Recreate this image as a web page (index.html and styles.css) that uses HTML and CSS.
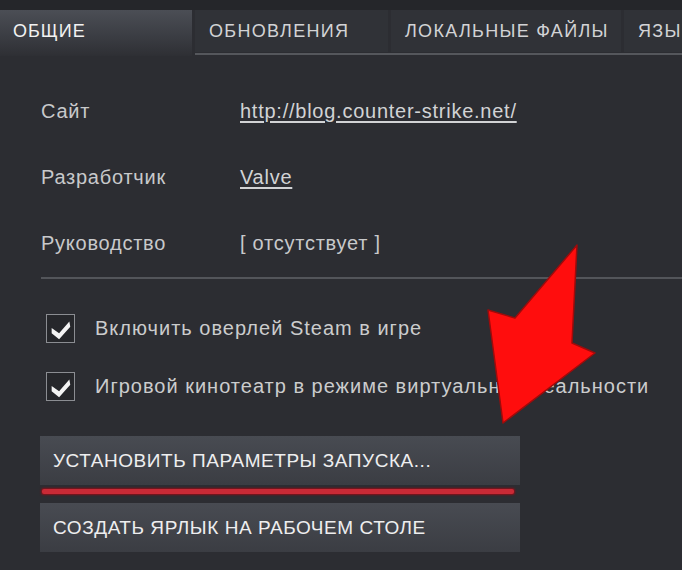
FILE: index.html
```html
<!DOCTYPE html>
<html lang="ru">
<head>
<meta charset="utf-8">
<title>Свойства</title>
<link rel="stylesheet" href="styles.css">
</head>
<body>
<div class="page">
  <div class="tabs">
    <div class="tab active">ОБЩИЕ</div>
    <div class="tab-rest">
      <div class="tab t2">ОБНОВЛЕНИЯ</div>
      <div class="tab t3">ЛОКАЛЬНЫЕ ФАЙЛЫ</div>
      <div class="tab t4">ЯЗЫК</div>
    </div>
  </div>

  <div class="info">
    <div class="label">Сайт</div>
    <div class="value"><a class="link" href="#">http://blog.counter-strike.net/</a></div>
    <div class="label">Разработчик</div>
    <div class="value"><a class="link" href="#">Valve</a></div>
    <div class="label">Руководство</div>
    <div class="value">[ отсутствует ]</div>
  </div>

  <div class="sep"></div>

  <div class="checks">
    <div class="check-row">
      <span class="box"><svg viewBox="0 0 29 29" width="29" height="29"><path d="M5 14 L13 19.5 L24 7 L25 12.5 L13 26 L5 19.5 Z" fill="#f4f4f4"/></svg></span>
      <span class="check-text">Включить оверлей Steam в игре</span>
    </div>
    <div class="check-row">
      <span class="box"><svg viewBox="0 0 29 29" width="29" height="29"><path d="M5 14 L13 19.5 L24 7 L25 12.5 L13 26 L5 19.5 Z" fill="#f4f4f4"/></svg></span>
      <span class="check-text">Игровой кинотеатр в режиме виртуальной реальности</span>
    </div>
  </div>

  <div class="buttons">
    <div class="btn first">УСТАНОВИТЬ ПАРАМЕТРЫ ЗАПУСКА...<span class="redline"></span></div>
    <div class="btn">СОЗДАТЬ ЯРЛЫК НА РАБОЧЕМ СТОЛЕ</div>
  </div>

  <svg class="arrow" viewBox="0 0 125 195" width="125" height="195">
    <polygon points="97,10 92,108 115,118 23,188 8,75 35,83" fill="#ff0d0d" stroke="#9e0b0b" stroke-width="1.5" stroke-linejoin="round"/>
  </svg>
</div>
</body>
</html>
```
FILE: styles.css
```css
html, body {
  margin: 0;
  padding: 0;
  background: #2c2d32;
}
.page {
  position: relative;
  width: 682px;
  height: 570px;
  overflow: hidden;
  background: #2c2d32;
  font-family: "Liberation Sans", Arial, sans-serif;
  color: #c9c9cb;
}
.tabs {
  display: flex;
  align-items: flex-start;
  padding-top: 10px;
  background: linear-gradient(#25262a 0, #25262a 10px, #2c2d32 10px);
}
.tab {
  height: 42px;
  display: flex;
  align-items: center;
  font-size: 18px;
  letter-spacing: 1.3px;
  color: #d2d3d5;
  white-space: nowrap;
  overflow: hidden;
  box-sizing: border-box;
  flex-shrink: 0;
}
.tab.active {
  width: 192px;
  height: 46px;
  padding: 0 0 4px 13px;
  color: #f2f2f2;
  letter-spacing: 1px;
  background: linear-gradient(#4b4e55, #3a3c42 60%, #2e2f34);
}
.tab-rest {
  flex: 1;
  min-width: 0;
  display: flex;
  gap: 3px;
  margin-left: 3px;
  border-bottom: 2px solid #55575c;
  padding-bottom: 1px;
  overflow: hidden;
}
.tab-rest .tab {
  background: #303237;
  padding-left: 14px;
}
.t2 { width: 193px; }
.t3 { width: 230px; }
.t4 { width: 80px; }

.info {
  display: grid;
  grid-template-columns: 199px 1fr;
  row-gap: 42px;
  padding: 43px 0 0 41px;
  font-size: 20px;
  line-height: 24px;
  letter-spacing: 0.75px;
}
.label { color: #c8c9cb; }
.value { color: #c8c9cb; }
.link {
  color: #d2d3d5;
  text-decoration: underline;
  text-underline-offset: 3px;
}
.sep {
  margin: 22px 0 0 41px;
  height: 2px;
  background: #53555a;
}
.checks {
  display: flex;
  flex-direction: column;
  gap: 29px;
  padding: 35px 0 0 46px;
}
.check-row {
  display: flex;
  align-items: center;
  gap: 20px;
}
.box {
  width: 29px;
  height: 29px;
  box-sizing: border-box;
  border: 1.5px solid #8b8d92;
  background: #26272b;
  display: flex;
  align-items: center;
  justify-content: center;
}
.box svg { display: block; }
.check-text {
  font-size: 20px;
  letter-spacing: 1px;
  color: #cbcccd;
  white-space: nowrap;
}
.buttons {
  display: flex;
  flex-direction: column;
  gap: 18px;
  padding: 35px 0 0 40px;
  width: 480px;
}
.btn {
  position: relative;
  height: 49px;
  box-sizing: border-box;
  padding-left: 13px;
  display: flex;
  align-items: center;
  font-size: 19px;
  letter-spacing: 0.55px;
  color: #eeeeef;
  background: linear-gradient(#484b52, #3b3d43);
  white-space: nowrap;
}
.redline {
  position: absolute;
  left: 2px;
  width: 472px;
  top: 53px;
  height: 5px;
  border-radius: 2px;
  background: #c92a36;
  box-shadow: 0 0 2px 1px #8a0f18;
}
.arrow {
  position: absolute;
  left: 480px;
  top: 235px;
}
```
